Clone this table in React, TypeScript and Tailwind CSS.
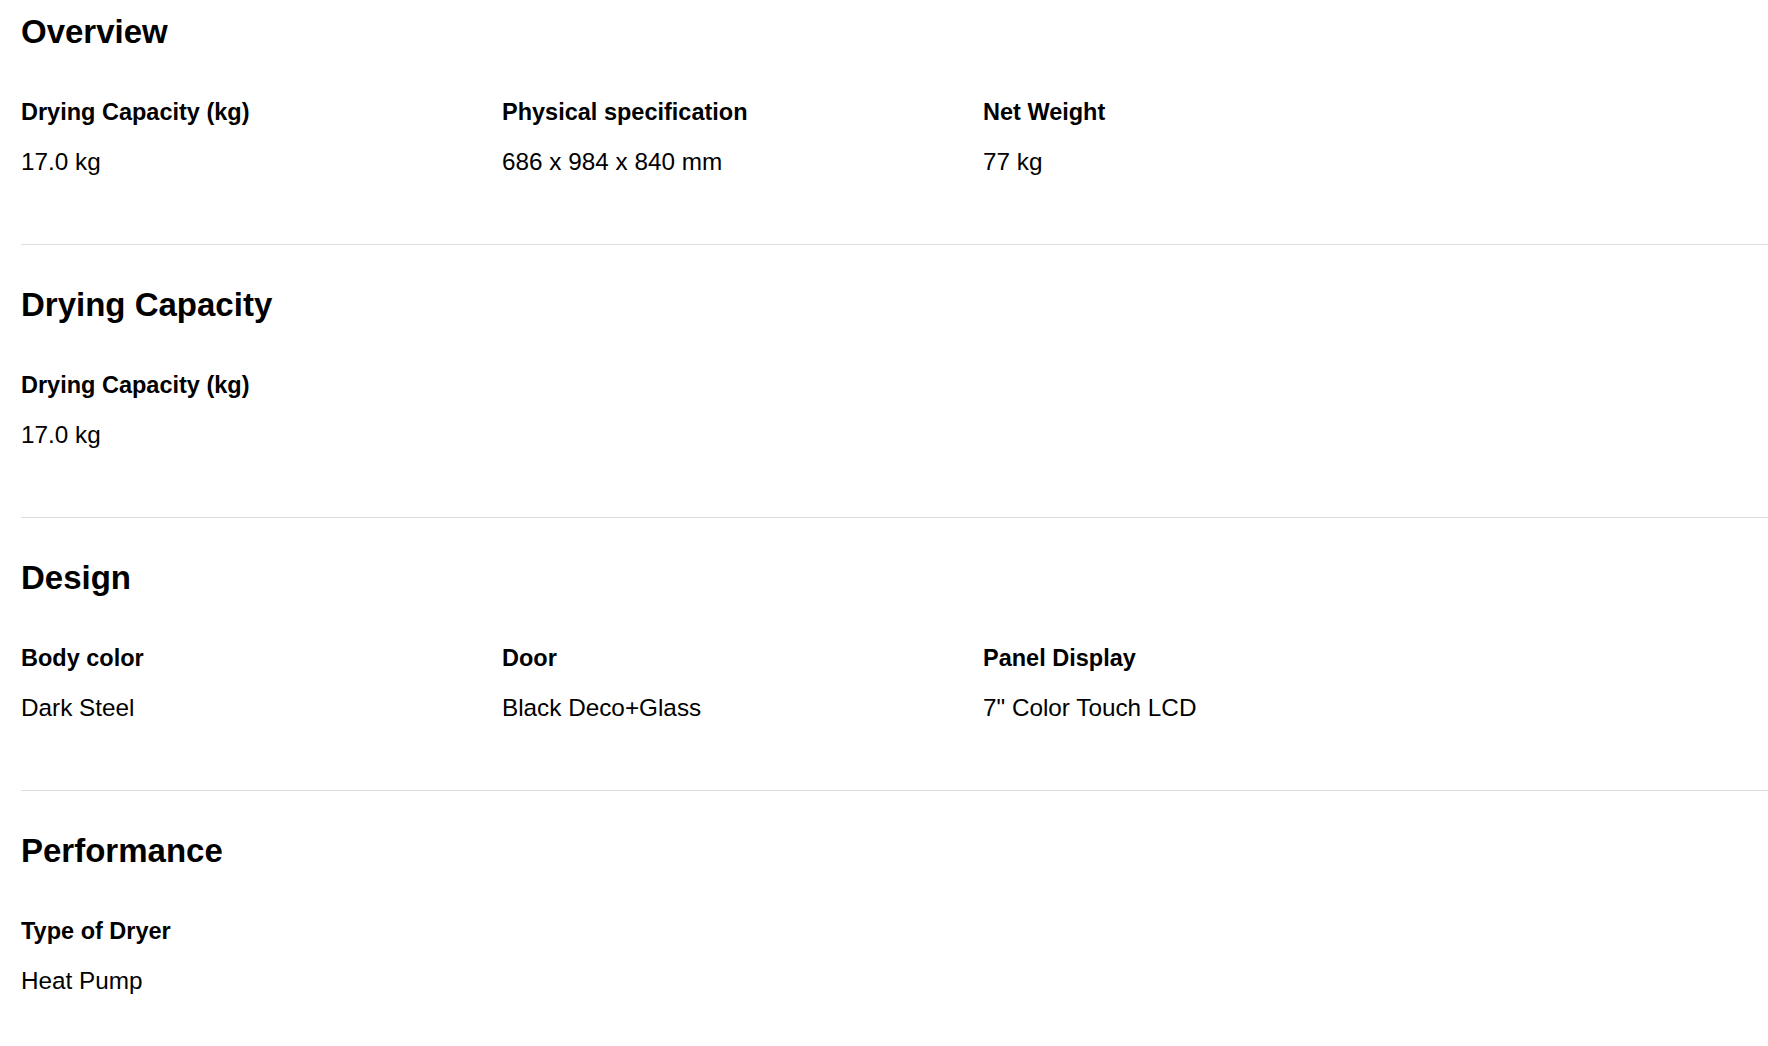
import React from 'react';

type Spec = { label: string; value: string };
type Section = { title: string; specs: Spec[] };

const sections: Section[] = [
  {
    title: 'Overview',
    specs: [
      { label: 'Drying Capacity (kg)', value: '17.0 kg' },
      { label: 'Physical specification', value: '686 x 984 x 840 mm' },
      { label: 'Net Weight', value: '77 kg' },
    ],
  },
  {
    title: 'Drying Capacity',
    specs: [{ label: 'Drying Capacity (kg)', value: '17.0 kg' }],
  },
  {
    title: 'Design',
    specs: [
      { label: 'Body color', value: 'Dark Steel' },
      { label: 'Door', value: 'Black Deco+Glass' },
      { label: 'Panel Display', value: '7" Color Touch LCD' },
    ],
  },
  {
    title: 'Performance',
    specs: [{ label: 'Type of Dryer', value: 'Heat Pump' }],
  },
];

function SpecSection({ section, first }: { section: Section; first: boolean }) {
  return (
    <section className={`${first ? 'pt-[12px]' : 'pt-[40px] border-t border-[#dddddd]'} pb-[66px]`}>
      <h2 className="text-[33px] leading-[40px] font-bold text-black">{section.title}</h2>
      <div className="mt-[44px] grid grid-cols-[481px_481px_481px]">
        {section.specs.map((spec) => (
          <div key={spec.label}>
            <div className="text-[23.5px] leading-[32px] font-bold text-black">{spec.label}</div>
            <div className="mt-[18px] text-[24.3px] leading-[32px] text-black">{spec.value}</div>
          </div>
        ))}
      </div>
    </section>
  );
}

export default function App() {
  return (
    <div
      className="min-h-screen bg-white pl-[21px] overflow-hidden"
      style={{ fontFamily: '"Liberation Sans", Arial, sans-serif' }}
    >
      {sections.map((s, i) => (
        <SpecSection key={s.title} section={s} first={i === 0} />
      ))}
    </div>
  );
}
